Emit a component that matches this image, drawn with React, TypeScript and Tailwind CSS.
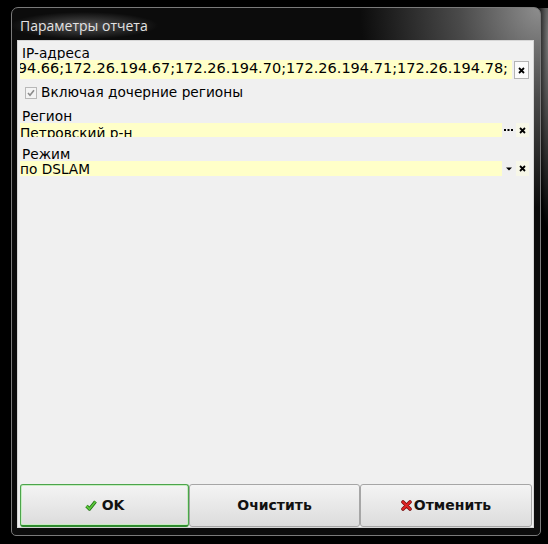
import React from "react";

function SmallX() {
  return (
    <svg width="7" height="7" viewBox="0 0 7 7">
      <path d="M1 1L6 6M6 1L1 6" stroke="#000" strokeWidth="1.8" />
    </svg>
  );
}

function FieldButton({ children, boxed }: { children: React.ReactNode; boxed?: boolean }) {
  return (
    <div
      className={
        boxed
          ? "ml-[2px] mt-[1px] flex h-[18px] w-[15px] items-center justify-center border border-[#b4b4b4] bg-[#fbfbfb]"
          : "ml-[1px] flex h-full w-[13px] items-center justify-center bg-[#f7f7e8]"
      }
    >
      {children}
    </div>
  );
}

function Dots() {
  return (
    <svg width="9" height="3" viewBox="0 0 9 3">
      <rect x="0" y="0" width="2" height="2" fill="#000" />
      <rect x="3.5" y="0" width="2" height="2" fill="#000" />
      <rect x="7" y="0" width="2" height="2" fill="#000" />
    </svg>
  );
}

function Arrow() {
  return (
    <svg width="6" height="4" viewBox="0 0 6 4">
      <path d="M0 0.5H6L3 3.5Z" fill="#000" />
    </svg>
  );
}

function CheckIcon() {
  return (
    <svg width="12" height="11" viewBox="0 0 12 11">
      <path d="M1.5 6L4.5 9L10.5 1.5" fill="none" stroke="#1f6e12" strokeWidth="3.4" strokeLinejoin="round" />
      <path d="M1.5 6L4.5 9L10.5 1.5" fill="none" stroke="#5cc83c" strokeWidth="1.8" strokeLinejoin="round" />
    </svg>
  );
}

function CrossIcon() {
  return (
    <svg width="11" height="11" viewBox="0 0 11 11">
      <path d="M2 2L9 9M9 2L2 9" stroke="#7a0c0c" strokeWidth="3.6" strokeLinecap="round" />
      <path d="M2 2L9 9M9 2L2 9" stroke="#e02424" strokeWidth="2" strokeLinecap="round" />
    </svg>
  );
}

export default function App() {
  return (
    <div className="h-[544px] w-[548px] overflow-hidden bg-black bg-[linear-gradient(#000_0_8px,transparent_8px),radial-gradient(ellipse_12px_190px_at_100%_40px,#777,transparent)] pl-[11px] pt-[7px] font-['DejaVu_Sans',sans-serif] text-black">
      <div className="flex h-[529px] w-[530px] flex-col rounded-t-[7px] rounded-b-[5px] border border-[#7a7a7a] bg-[#060606] bg-[radial-gradient(ellipse_180px_200px_at_100%_0%,#8e8e8e,#4a4a4a_45%,#0c0c0c_100%)]">
        <div className="flex h-[32px] items-center pl-[8px] pt-[2px]">
          <span className="-ml-[10px] rounded-[10px] bg-[radial-gradient(closest-side,rgba(140,140,140,0.55),transparent)] px-[10px] py-[3px] font-['Open_Sans',sans-serif] text-[14px] text-[#e2e2e2]">
            Параметры отчета
          </span>
        </div>

        <div className="mb-[7px] ml-[5px] mr-[6px] flex flex-1 flex-col border border-[#d6d6d6] bg-[#f0f0f0]">
          <div className="pl-[2px] pr-[4px] text-[13.7px] leading-[15px]">
            <div className="mt-[5px] h-[14px] pl-[2px]">IP-адреса</div>
            <div className="flex h-[20px] items-start">
              <div className="flex h-[19px] flex-1 justify-end overflow-hidden whitespace-nowrap bg-[#ffffc8] pr-[4px] text-[14.5px] leading-[16px]">
                172.26.194.66;172.26.194.67;172.26.194.70;172.26.194.71;172.26.194.78;
              </div>
              <FieldButton boxed>
                <SmallX />
              </FieldButton>
            </div>

            <div className="flex h-[29px] items-start pl-[5px] pt-[5px]">
              <div className="mt-[2px] flex h-[12px] w-[12px] items-center justify-center border border-[#b8b8b8] bg-[#f4f4f4]">
                <svg width="8" height="8" viewBox="0 0 8 8">
                  <path d="M1 4L3 6.2L7 1.2" fill="none" stroke="#8c8c8c" strokeWidth="1.6" />
                </svg>
              </div>
              <span className="ml-[4px]">Включая дочерние регионы</span>
            </div>

            <div className="h-[14px] pl-[2px]">Регион</div>
            <div className="flex h-[14px]">
              <div className="flex-1 overflow-hidden whitespace-nowrap bg-[#ffffc8] pt-[3px]">Петровский р-н</div>
              <div className="flex h-full w-[13px] items-end justify-center bg-[#f0f0f0] pb-[5px]">
                <Dots />
              </div>
              <FieldButton>
                <SmallX />
              </FieldButton>
            </div>

            <div className="mt-[10px] h-[14px] pl-[2px]">Режим</div>
            <div className="flex h-[15px]">
              <div className="flex-1 overflow-hidden whitespace-nowrap bg-[#ffffc8] pt-[1px]">по DSLAM</div>
              <div className="flex h-full w-[13px] items-center justify-center bg-[#f0f0f0]">
                <Arrow />
              </div>
              <FieldButton>
                <SmallX />
              </FieldButton>
            </div>
          </div>

          <div className="flex-1" />

          <div className="flex h-[43px] pl-[2px] pr-[1px] text-[14px] font-bold text-[#111]">
            <button className="flex w-[169px] items-center justify-center gap-[5px] rounded-[3px] border border-b-2 border-[#4ca44c] border-b-[#2f8a2f] bg-[linear-gradient(#f4f4f4,#dcdcdc)] shadow-[inset_0_0_0_1px_#c6eec0]">
              <CheckIcon />
              <span>OK</span>
            </button>
            <button className="flex w-[171px] items-center justify-center rounded-[3px] border border-[#a6a6a6] bg-[linear-gradient(#f4f4f4,#dcdcdc)]">
              Очистить
            </button>
            <button className="flex flex-1 items-center justify-center gap-[2px] rounded-[3px] border border-[#a6a6a6] bg-[linear-gradient(#f4f4f4,#dcdcdc)]">
              <CrossIcon />
              <span>Отменить</span>
            </button>
          </div>
        </div>
      </div>
    </div>
  );
}
